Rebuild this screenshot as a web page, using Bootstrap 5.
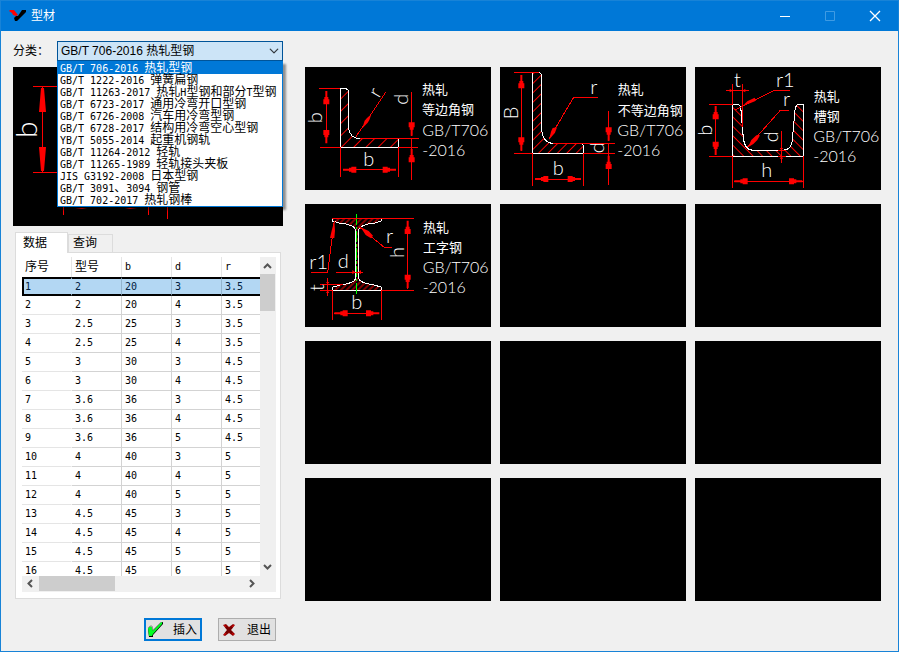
<!DOCTYPE html>
<html lang="zh-CN">
<head>
<meta charset="utf-8">
<meta name="viewport" content="width=device-width, initial-scale=1">
<title>型材</title>
<link href="https://cdn.jsdelivr.net/npm/bootstrap@5.3.0/dist/css/bootstrap.min.css" rel="stylesheet">
<style>
  body { font: 12px/12px "Liberation Sans", "Noto Sans CJK SC", sans-serif; color: #000; background: #f0f0f0; }
  .lat { font-family: "DejaVu Sans Mono", monospace; font-size: 10px; white-space: pre; }
  .app-window { min-height: 100vh; border: 1px solid #1883d7; }
  .titlebar { height: 30px; background: #0078d7; color: #fff; padding-left: 8px; padding-right: 1px; }
  .titlebar button { width: 45px; height: 30px; padding: 0; border: 0; background: none; color: #fff; }
  .titlebar button:disabled { color: #3f9be3; }
  .work { padding: 10px 17px 10px 12px; gap: 22px; }
  .side { flex: 0 0 270px; min-width: 0; }
  .pick { position: relative; flex: 0 0 226px; }
  .pick .form-select { height: 20px; padding: 0 20px 0 3px; border: 1px solid #005499; border-radius: 0; font: inherit; line-height: 18px; color: #000; background-color: #cce4f7; background-position: right 3px center; background-size: 10px; }
  .choices { position: absolute; top: 20px; left: 0; right: 0; z-index: 5; margin: 0; padding: 0; list-style: none; background: #fff; border: 1px solid #0078d7; box-shadow: 3px 3px 2px rgba(0,0,0,.4); }
  .choices button { display: block; width: 100%; height: 12px; padding: 0 2px; border: 0; background: none; text-align: left; line-height: 12px; color: #000; white-space: nowrap; }
  .choices .current { background: #0078d7; color: #fff; }
  svg { display: block; }
  .drawing { width: 100%; height: auto; background: #000; }
  .side .drawing { margin-top: 6px; }
  .pages { margin: 6px 2px 0; padding: 0; border: 0; align-items: flex-end; }
  .pages .nav-link { height: 18px; padding: 0 15px 0 4px; border: 1px solid #dcdcdc; border-bottom: 0; border-radius: 0; background: #f0f0f0; color: #000; margin: 0; line-height: 17px; }
  .pages .nav-link.active { height: 21px; padding: 0 20px 0 7px; background: #fff; color: #000; position: relative; margin-bottom: -1px; line-height: 19px; border-color: #dcdcdc; }
  .sheet { margin: 0 2px; padding: 4px 4px 6px 6px; background: #fff; border: 1px solid #dcdcdc; min-height: 200px; }
  .sheet-view { flex: 1 1 0; min-width: 0; overflow: hidden; }
  .sections { width: 250px; table-layout: fixed; border-collapse: separate; border-spacing: 0; }
  .sections th, .sections td { height: 19px; padding: 0 0 0 3px; font-weight: 400; line-height: 12px; border-right: 1px solid #d3d3d3; border-bottom: 1px solid #d3d3d3; }
  .sections th { height: 20px; border-bottom: 0; border-right-color: #e5e5e5; }
  .sections td:first-child { border-right-color: #fff; border-bottom-color: #e5e5e5; }
  .sections .chosen td { background: #b3d7f3; border-top: 2px solid #000; border-bottom: 2px solid #000; border-right-color: #93b4cd; color: #002040; }
  .sections .chosen td:first-child { border-left: 2px solid #000; padding-left: 1px; border-right-color: #b3d7f3; }
  .bar-v { flex: 0 0 16px; background: #f0f0f0; }
  .bar-h { height: 16px; background: #f0f0f0; }
  .thumb-v { width: 15px; height: 37px; background: #cdcdcd; }
  .thumb-h { width: 76px; height: 15px; background: #cdcdcd; }
  .actions { margin-top: 19px; gap: 16px; padding-right: 7px; }
  .actions .btn { width: 58px; height: 23px; padding: 0 4px 0 3px; border: 1px solid #adadad; border-radius: 0; background: #e1e1e1; color: #000; font: inherit; }
  .actions .btn-go { border: 2px solid #0078d7; padding: 0 3px 0 1px; }
  .gallery { display: grid; grid-template-columns: repeat(3, minmax(0, 1fr)); gap: 14px 9px; padding-top: 26px; align-content: start; }
  .tile { padding: 0; border: 0; background: #000; aspect-ratio: 186 / 123; }
  .red { stroke: #f00; stroke-width: 3; fill: none; shape-rendering: crispEdges; }
  .arrow { fill: #f00; stroke: none; }
  .steel { stroke: #fff; stroke-width: 3; shape-rendering: crispEdges; }
  .drawing text { fill: #fff; font-family: Lato, "Noto Sans CJK SC", sans-serif; font-weight: 300; font-size: 60px; }
  .drawing .cap text { font-size: 48px; }
  .drawing .cap .han { font-size: 39px; font-weight: 400; }
  .side .drawing text { font-size: 30px; }
</style>
<script src="https://cdn.jsdelivr.net/npm/bootstrap@5.3.0/dist/js/bootstrap.bundle.min.js"></script>
</head>
<body>
<svg width="0" height="0" class="position-absolute" aria-hidden="true">
  <defs>
    <path id="tip" d="M-3 0H3V18H6V25H9V40H-9V25H-6V18H-3Z"/>
    <pattern id="hatchA" width="26" height="26" patternUnits="userSpaceOnUse" patternTransform="rotate(45)"><path d="M13 0V26" stroke="#f00" stroke-width="3"/></pattern>
    <pattern id="hatchB" width="20" height="20" patternUnits="userSpaceOnUse" patternTransform="rotate(45)"><path d="M10 0V20" stroke="#f00" stroke-width="3"/></pattern>
    <pattern id="hatchC" width="20" height="20" patternUnits="userSpaceOnUse" patternTransform="rotate(-45)"><path d="M10 0V20" stroke="#f00" stroke-width="3"/></pattern>
    <pattern id="hatchD" width="12" height="12" patternUnits="userSpaceOnUse" patternTransform="rotate(45)"><path d="M6 0V12" stroke="#f00" stroke-width="3"/></pattern>
  </defs>
</svg>
<div class="app-window d-flex flex-column">
  <header class="titlebar d-flex align-items-center">
    <svg width="18" height="12" viewBox="0 0 18 12" aria-hidden="true"><path d="M0 1L1 0H5L9 5L7 6L4 5L3 3Z" fill="#f00"/><path d="M13 0H17V2L8 11H6L5 8L7 6L9 6Z" fill="#000"/></svg>
    <span class="ms-1">型材</span>
    <div class="ms-auto d-flex">
      <button type="button" aria-label="最小化"><svg class="mx-auto" width="12" height="12"><path d="M1 6.500H11" stroke="currentColor"/></svg></button>
      <button type="button" aria-label="最大化" disabled><svg class="mx-auto" width="12" height="12"><path d="M1.500 1.500H10.500V10.500H1.500Z" stroke="currentColor" fill="none"/></svg></button>
      <button type="button" aria-label="关闭"><svg class="mx-auto" width="12" height="12"><path d="M1 1L11 11M11 1L1 11" stroke="currentColor" stroke-width="1.300"/></svg></button>
    </div>
  </header>

  <main class="work d-flex flex-fill">
    <section class="side d-flex flex-column">
      <div class="d-flex align-items-center justify-content-between">
        <label for="kind">分类：</label>
        <div class="pick">
          <select id="kind" class="form-select"><option>GB/T 706-2016 热轧型钢</option></select>
          <ul class="choices">
            <li><button type="button" class="current"><span class="lat">GB/T 706-2016 </span>热轧型钢</button></li>
            <li><button type="button"><span class="lat">GB/T 1222-2016 </span>弹簧扁钢</button></li>
            <li><button type="button"><span class="lat">GB/T 11263-2017 </span>热轧<span class="lat">H</span>型钢和部分<span class="lat">T</span>型钢</button></li>
            <li><button type="button"><span class="lat">GB/T 6723-2017 </span>通用冷弯开口型钢</button></li>
            <li><button type="button"><span class="lat">GB/T 6726-2008 </span>汽车用冷弯型钢</button></li>
            <li><button type="button"><span class="lat">GB/T 6728-2017 </span>结构用冷弯空心型钢</button></li>
            <li><button type="button"><span class="lat">YB/T 5055-2014 </span>起重机钢轨</button></li>
            <li><button type="button"><span class="lat">GB/T 11264-2012 </span>轻轨</button></li>
            <li><button type="button"><span class="lat">GB/T 11265-1989 </span>轻轨接头夹板</button></li>
            <li><button type="button"><span class="lat">JIS G3192-2008 </span>日本型钢</button></li>
            <li><button type="button"><span class="lat">GB/T 3091</span>、<span class="lat">3094 </span>钢管</button></li>
            <li><button type="button"><span class="lat">GB/T 702-2017 </span>热轧钢棒</button></li>
          </ul>
        </div>
      </div>

      <svg class="drawing" viewBox="0 0 270 159" role="img" aria-label="截面预览">
        <path d="M20 19.500H60M20 105.500H60M29.500 20V105M50.500 130V148M135.500 130V148M154.500 130V152" stroke="#f00" fill="none"/>
        <path d="M28 21H31L33 45H26ZM28 104H31L33 80H26ZM62 141H74L69 142ZM124 141H112L117 142Z" fill="#f00"/>
        <text transform="translate(24 71) rotate(-90)">b</text>
      </svg>

      <div class="pages nav nav-tabs" role="tablist">
        <button type="button" class="nav-link active" role="tab" aria-selected="true">数据</button>
        <button type="button" class="nav-link" role="tab" aria-selected="false">查询</button>
      </div>
      <div class="sheet d-flex flex-column flex-fill">
        <div class="d-flex flex-fill overflow-hidden">
          <div class="sheet-view d-flex flex-column"><div class="sheet-view">
            <table class="sections">
              <thead><tr><th>序号</th><th>型号</th><th class="lat">b</th><th class="lat">d</th><th class="lat">r</th></tr></thead>
              <tbody class="lat">
                <tr class="chosen"><td>1</td><td>2</td><td>20</td><td>3</td><td>3.5</td></tr>
                <tr><td>2</td><td>2</td><td>20</td><td>4</td><td>3.5</td></tr>
                <tr><td>3</td><td>2.5</td><td>25</td><td>3</td><td>3.5</td></tr>
                <tr><td>4</td><td>2.5</td><td>25</td><td>4</td><td>3.5</td></tr>
                <tr><td>5</td><td>3</td><td>30</td><td>3</td><td>4.5</td></tr>
                <tr><td>6</td><td>3</td><td>30</td><td>4</td><td>4.5</td></tr>
                <tr><td>7</td><td>3.6</td><td>36</td><td>3</td><td>4.5</td></tr>
                <tr><td>8</td><td>3.6</td><td>36</td><td>4</td><td>4.5</td></tr>
                <tr><td>9</td><td>3.6</td><td>36</td><td>5</td><td>4.5</td></tr>
                <tr><td>10</td><td>4</td><td>40</td><td>3</td><td>5</td></tr>
                <tr><td>11</td><td>4</td><td>40</td><td>4</td><td>5</td></tr>
                <tr><td>12</td><td>4</td><td>40</td><td>5</td><td>5</td></tr>
                <tr><td>13</td><td>4.5</td><td>45</td><td>3</td><td>5</td></tr>
                <tr><td>14</td><td>4.5</td><td>45</td><td>4</td><td>5</td></tr>
                <tr><td>15</td><td>4.5</td><td>45</td><td>5</td><td>5</td></tr>
                <tr><td>16</td><td>4.5</td><td>45</td><td>6</td><td>5</td></tr>
              </tbody>
            </table>
          </div></div>
          <div class="bar-v d-flex flex-column justify-content-between">
            <div>
              <svg width="15" height="17" aria-hidden="true"><path d="M4 11L7.500 7.500L11 11" stroke="#555" stroke-width="2" fill="none"/></svg>
              <div class="thumb-v"></div>
            </div>
            <svg width="15" height="17" aria-hidden="true"><path d="M4 6L7.500 9.500L11 6" stroke="#555" stroke-width="2" fill="none"/></svg>
          </div>
        </div>
        <div class="bar-h d-flex justify-content-between">
          <div class="d-flex">
            <svg width="17" height="15" aria-hidden="true"><path d="M10 4L6.500 7.500L10 11" stroke="#555" stroke-width="2" fill="none"/></svg>
            <div class="thumb-h"></div>
          </div>
          <svg class="me-3" width="17" height="15" aria-hidden="true"><path d="M7 4L10.500 7.500L7 11" stroke="#555" stroke-width="2" fill="none"/></svg>
        </div>
      </div>

      <div class="actions d-flex justify-content-end">
        <button type="button" class="btn btn-go d-flex align-items-center justify-content-between">
          <svg width="17" height="17" viewBox="0 0 17 17" aria-hidden="true"><path d="M1 8L3 6H5L6 10L13 2L16 1V3L6 14V16H2Z" fill="#000"/><path d="M1 7L3 5L5 6L6 10L14 1H15V3L6 13L5 15H2Z" fill="#0f2"/><path d="M1 7L3 5H5L6 9L14 1" stroke="#909090" fill="none"/></svg>
          <span>插入</span>
        </button>
        <button type="button" class="btn d-flex align-items-center justify-content-between">
          <svg width="14" height="14" viewBox="0 0 14 14" aria-hidden="true"><path d="M1 2L4 1L7 4L11 1L13 2L9 7L13 11L11 13L7 10L3 13L1 12L5 7Z" fill="#900000"/><path d="M2 2L12 12M12 2L2 12" stroke="#d00000"/><path d="M4 4L10 10M10 4L4 10" stroke="#700000" stroke-width="2"/></svg>
          <span>退出</span>
        </button>
      </div>
    </section>

    <section class="gallery flex-fill">
      <button type="button" class="tile">
        <svg class="drawing" viewBox="15 21 558 369">
          <path class="steel" fill="url(#hatchA)" d="M122 262V86H138L146 92V205Q150 235 180 236H296V262Z"/>
          <path class="red" d="M57 86H121M59 262H121M79 93V250M122 262V350M296 262V350M129 329H288M180 236H357M296 262H355M335 97V227M335 236V360M257 97L168 230"/>
          <g class="arrow">
            <use href="#tip" transform="translate(79 93)"/><use href="#tip" transform="translate(79 250) rotate(180)"/>
            <use href="#tip" transform="translate(129 329) rotate(-90)"/><use href="#tip" transform="translate(288 329) rotate(90)"/>
            <use href="#tip" transform="translate(335 227) rotate(180)"/><use href="#tip" transform="translate(335 267)"/>
            <path d="M187 205L194 182L201 174L214 163L208 180L203 188Z"/>
          </g>
          <text transform="translate(67 190) rotate(-90)">b</text>
          <text transform="translate(237 116) rotate(-60)">r</text>
          <text transform="translate(323 134) rotate(-90)">d</text>
          <text x="190" y="318">b</text>
          <g class="cap"><text class="han" x="366" y="101">热轧</text><text class="han" x="366" y="162">等边角钢</text><text x="367" y="228">GB/T706</text><text x="367" y="288">-2016</text></g>
        </svg>
      </button>
      <button type="button" class="tile">
        <svg class="drawing" viewBox="15 21 558 369">
          <path class="steel" fill="url(#hatchB)" d="M113 280V38H134L140 44V210Q145 250 175 250H258L266 257V280Z"/>
          <path class="red" d="M57 38H133M57 280H113M79 45V272M113 280V377M266 280V377M121 357H257M175 250H360M266 280H360M341 153V242M341 250V375M309 112H236L162 237"/>
          <g class="arrow">
            <use href="#tip" transform="translate(79 45)"/><use href="#tip" transform="translate(79 272) rotate(180)"/>
            <use href="#tip" transform="translate(120 357) rotate(-90)"/><use href="#tip" transform="translate(258 357) rotate(90)"/>
            <use href="#tip" transform="translate(341 242) rotate(180)"/><use href="#tip" transform="translate(341 287)"/>
            <path d="M162 239L168 215L173 204L186 202L180 218Z"/>
          </g>
          <text transform="translate(68 178) rotate(-90)">B</text>
          <text x="286" y="101">r</text>
          <text transform="translate(328 280) rotate(-90)">d</text>
          <text x="173" y="346">b</text>
          <g class="cap"><text class="han" x="368" y="103">热轧</text><text class="han" x="368" y="164">不等边角钢</text><text x="367" y="228">GB/T706</text><text x="367" y="289">-2016</text></g>
        </svg>
      </button>
      <button type="button" class="tile">
        <svg class="drawing" viewBox="15 21 558 369">
          <path class="steel" fill="url(#hatchC)" d="M128 289V133H144L152 139L160 235Q165 271 190 271H280Q305 268 307 240L315 150Q317 133 327 133H341V289Z"/>
          <path class="red" d="M57 133H128M57 289H128M77 138V285M128 72V133M128 289V383M341 289V383M132 364H338M107 92H177M157 72V200M300 91H253L135 150M297 151H271L172 262M274 213V308M263 271H288M263 289H288"/>
          <g class="arrow">
            <use href="#tip" transform="translate(77 138)"/><use href="#tip" transform="translate(77 285) rotate(180)"/>
            <use href="#tip" transform="translate(133 364) rotate(-90)"/><use href="#tip" transform="translate(337 364) rotate(90)"/>
            <path d="M160 136L172 124L194 113L198 122L180 130ZM174 262L184 240L199 226L210 226L202 240L190 252ZM119 86L128 92L119 97ZM166 86L157 92L166 97ZM269 264H280L274 271ZM269 296H280L274 289Z"/>
          </g>
          <text x="132" y="82">t</text>
          <text x="258" y="82">r1</text>
          <text x="279" y="137">r</text>
          <text transform="translate(66 227) rotate(-90)">b</text>
          <text transform="translate(263 247) rotate(-90)">d</text>
          <text x="214" y="351">h</text>
          <g class="cap"><text class="han" x="371" y="123">热轧</text><text class="han" x="371" y="182">槽钢</text><text x="370" y="246">GB/T706</text><text x="370" y="305">-2016</text></g>
        </svg>
      </button>
      <button type="button" class="tile">
        <svg class="drawing" viewBox="15 18 558 369">
          <path class="steel" fill="url(#hatchD)" d="M97 61H245V68L225 75Q178 80 176 97V240Q178 255 220 260L245 268V277H97V268L120 261Q165 255 166 242V97Q165 80 118 75L97 69Z"/>
          <path d="M169 47V292" stroke="#0f0" stroke-width="3" stroke-dasharray="34 5 8 5" shape-rendering="crispEdges"/>
          <path class="red" d="M97 61H342M245 277H342M323 69V272M97 277V365M245 277V365M103 346H238M33 223H83L103 68M107 223H188M276 148H253L178 87M60 259H130M60 277H97M83 240V293"/>
          <g class="arrow">
            <use href="#tip" transform="translate(323 68)"/><use href="#tip" transform="translate(323 270) rotate(180)"/>
            <use href="#tip" transform="translate(103 346) rotate(-90)"/><use href="#tip" transform="translate(238 346) rotate(90)"/>
            <path d="M103 68L105 98L103 120H90L95 98ZM182 88L206 99L219 113L213 121L197 111ZM157 216L166 223L157 229ZM183 216L175 223L183 229ZM78 252H88L83 259ZM78 285H88L83 277Z"/>
          </g>
          <text x="28" y="212">r1</text>
          <text x="113" y="211">d</text>
          <text x="258" y="135">r</text>
          <text transform="translate(312 180) rotate(-90)">h</text>
          <text transform="translate(72 279) rotate(-90)">t</text>
          <text x="154" y="333">b</text>
          <g class="cap"><text class="han" x="369" y="101">热轧</text><text class="han" x="369" y="162">工字钢</text><text x="368" y="224">GB/T706</text><text x="368" y="285">-2016</text></g>
        </svg>
      </button>
      <button type="button" class="tile" aria-label="空"></button>
      <button type="button" class="tile" aria-label="空"></button>
      <button type="button" class="tile" aria-label="空"></button>
      <button type="button" class="tile" aria-label="空"></button>
      <button type="button" class="tile" aria-label="空"></button>
      <button type="button" class="tile" aria-label="空"></button>
      <button type="button" class="tile" aria-label="空"></button>
      <button type="button" class="tile" aria-label="空"></button>
    </section>
  </main>
</div>
</body>
</html>
